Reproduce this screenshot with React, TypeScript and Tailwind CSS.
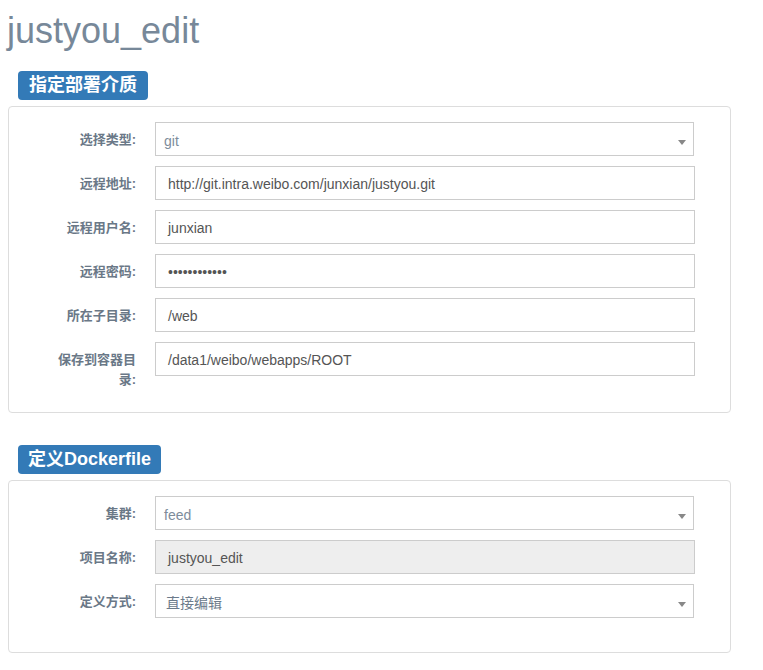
import React from "react";

const FONT = '"Liberation Sans", "Noto Sans CJK SC", Arial, sans-serif';

function Arrow() {
  return (
    <svg width="8" height="5" viewBox="0 0 8 5" className="absolute right-[7px] top-[17px]">
      <polygon points="0,0 8,0 4,5" fill="#888888" />
    </svg>
  );
}

type Row = {
  label: string;
  value: string;
  kind: "input" | "select" | "disabled";
  selectTone?: "light" | "slate";
};

function Field({ row }: { row: Row }) {
  if (row.kind === "select") {
    return (
      <div
        className={`relative h-[34px] w-[539px] border border-[#cccccc] bg-white flex items-center pt-[3px] text-[14px] leading-[20px] ${
          row.selectTone === "slate" ? "text-[#6c7b8b] pl-[10px]" : "text-[#7d8c9b] pl-[8px]"
        }`}
      >
        {row.value}
        <Arrow />
      </div>
    );
  }
  return (
    <div
      className={`h-[34px] w-[540px] border border-[#cccccc] flex items-center pl-[12px] pt-[2px] text-[14px] leading-[20px] text-[#555555] ${
        row.kind === "disabled" ? "bg-[#eeeeee]" : "bg-white"
      }`}
    >
      {row.value}
    </div>
  );
}

function Panel({ rows, pb }: { rows: Row[]; pb: string }) {
  return (
    <div className={`ml-[8px] w-[723px] rounded-[4px] border border-[#dddddd] bg-white pt-[15px] ${pb}`}>
      <div className="flex flex-col gap-[10px]">
        {rows.map((r) => (
          <div key={r.label} className="flex h-[34px] items-start">
            <div className="ml-[41px] w-[86px] pt-[8px] text-right text-[13px] font-bold leading-[20px] text-[#6a7887]">
              {r.label}
            </div>
            <div className="ml-[19px]">
              <Field row={r} />
            </div>
          </div>
        ))}
      </div>
    </div>
  );
}

function Badge({ children, px }: { children: React.ReactNode; px: string }) {
  return (
    <div className={`ml-[18px] inline-flex h-[29px] items-center rounded-[4px] bg-[#337ab7] ${px} text-[18px] font-bold text-white`}>
      {children}
    </div>
  );
}

export default function App() {
  const rows1: Row[] = [
    { label: "选择类型:", value: "git", kind: "select" },
    { label: "远程地址:", value: "http://git.intra.weibo.com/junxian/justyou.git", kind: "input" },
    { label: "远程用户名:", value: "junxian", kind: "input" },
    { label: "远程密码:", value: "••••••••••••", kind: "input" },
    { label: "所在子目录:", value: "/web", kind: "input" },
    { label: "保存到容器目录:", value: "/data1/weibo/webapps/ROOT", kind: "input" },
  ];
  const rows2: Row[] = [
    { label: "集群:", value: "feed", kind: "select" },
    { label: "项目名称:", value: "justyou_edit", kind: "disabled" },
    { label: "定义方式:", value: "直接编辑", kind: "select", selectTone: "slate" },
  ];
  return (
    <div className="min-h-[670px] w-full bg-white" style={{ fontFamily: FONT }}>
      <h1 className="h-[51px] pl-[7px] pt-[11px] text-[36px] font-normal leading-[1.1] text-[#778899]">justyou_edit</h1>
      <div className="mt-[20px] flex">
        <Badge px="px-[11px]">指定部署介质</Badge>
      </div>
      <div className="mt-[6px]">
        <Panel rows={rows1} pb="pb-[36px]" />
      </div>
      <div className="mt-[32px] flex">
        <Badge px="px-[10px]">定义Dockerfile</Badge>
      </div>
      <div className="mt-[6px]">
        <Panel rows={rows2} pb="pb-[34px]" />
      </div>
    </div>
  );
}
